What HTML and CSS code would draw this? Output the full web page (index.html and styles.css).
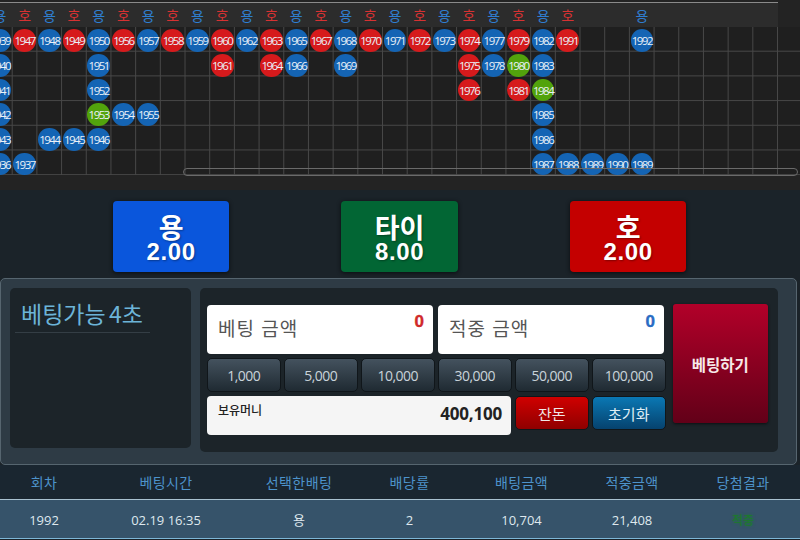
FILE: index.html
```html
<!DOCTYPE html>
<html lang="ko">
<head>
<meta charset="utf-8">
<title>베팅</title>
<link rel="stylesheet" href="styles.css">
</head>
<body>
<div class="page">
  <section class="board">
    <div class="head">
      <span class="lb y">용</span><span class="lb h">호</span><span class="lb y">용</span><span class="lb h">호</span><span class="lb y">용</span><span class="lb h">호</span><span class="lb y">용</span><span class="lb h">호</span><span class="lb y">용</span><span class="lb h">호</span><span class="lb y">용</span><span class="lb h">호</span><span class="lb y">용</span><span class="lb h">호</span><span class="lb y">용</span><span class="lb h">호</span><span class="lb y">용</span><span class="lb h">호</span><span class="lb y">용</span><span class="lb h">호</span><span class="lb y">용</span><span class="lb h">호</span><span class="lb y">용</span><span class="lb h">호</span><span class="lb"></span><span class="lb"></span><span class="lb y">용</span>
    </div>
    <div class="grid">
      <div class="col"><b class="dot bl">1939</b><b class="dot bl">1940</b><b class="dot bl">1941</b><b class="dot bl">1942</b><b class="dot bl">1943</b><b class="dot bl">1936</b></div>
      <div class="col"><b class="dot rd">1947</b><i></i><i></i><i></i><i></i><b class="dot bl">1937</b></div>
      <div class="col"><b class="dot bl">1948</b><i></i><i></i><i></i><b class="dot bl">1944</b></div>
      <div class="col"><b class="dot rd">1949</b><i></i><i></i><i></i><b class="dot bl">1945</b></div>
      <div class="col"><b class="dot bl">1950</b><b class="dot bl">1951</b><b class="dot bl">1952</b><b class="dot gr">1953</b><b class="dot bl">1946</b></div>
      <div class="col"><b class="dot rd">1956</b><i></i><i></i><b class="dot bl">1954</b></div>
      <div class="col"><b class="dot bl">1957</b><i></i><i></i><b class="dot bl">1955</b></div>
      <div class="col"><b class="dot rd">1958</b></div>
      <div class="col"><b class="dot bl">1959</b></div>
      <div class="col"><b class="dot rd">1960</b><b class="dot rd">1961</b></div>
      <div class="col"><b class="dot bl">1962</b></div>
      <div class="col"><b class="dot rd">1963</b><b class="dot rd">1964</b></div>
      <div class="col"><b class="dot bl">1965</b><b class="dot bl">1966</b></div>
      <div class="col"><b class="dot rd">1967</b></div>
      <div class="col"><b class="dot bl">1968</b><b class="dot bl">1969</b></div>
      <div class="col"><b class="dot rd">1970</b></div>
      <div class="col"><b class="dot bl">1971</b></div>
      <div class="col"><b class="dot rd">1972</b></div>
      <div class="col"><b class="dot bl">1973</b></div>
      <div class="col"><b class="dot rd">1974</b><b class="dot rd">1975</b><b class="dot rd">1976</b></div>
      <div class="col"><b class="dot bl">1977</b><b class="dot bl">1978</b></div>
      <div class="col"><b class="dot rd">1979</b><b class="dot gr">1980</b><b class="dot rd">1981</b></div>
      <div class="col"><b class="dot bl">1982</b><b class="dot bl">1983</b><b class="dot gr">1984</b><b class="dot bl">1985</b><b class="dot bl">1986</b><b class="dot bl">1987</b></div>
      <div class="col"><b class="dot rd">1991</b><i></i><i></i><i></i><i></i><b class="dot bl">1988</b></div>
      <div class="col"><i></i><i></i><i></i><i></i><i></i><b class="dot bl">1989</b></div>
      <div class="col"><i></i><i></i><i></i><i></i><i></i><b class="dot bl">1990</b></div>
      <div class="col"><b class="dot bl">1992</b><i></i><i></i><i></i><i></i><b class="dot bl">1989</b></div>
    </div>
    <div class="thumb"></div>
  </section>

  <section class="picks">
    <button class="pick blue"><span class="pick-name">용</span><span class="pick-odds">2.00</span></button>
    <button class="pick green"><span class="pick-name">타이</span><span class="pick-odds">8.00</span></button>
    <button class="pick red"><span class="pick-name">호</span><span class="pick-odds">2.00</span></button>
  </section>

  <section class="panel">
    <div class="timer"><h2>베팅가능 4초</h2></div>
    <div class="slip">
      <div class="slip-main">
        <div class="amounts">
          <div class="amount"><span>베팅 금액</span><strong class="zero-r">0</strong></div>
          <div class="amount"><span>적중 금액</span><strong class="zero-b">0</strong></div>
        </div>
        <div class="chips">
          <button class="chip">1,000</button><button class="chip">5,000</button><button class="chip">10,000</button><button class="chip">30,000</button><button class="chip">50,000</button><button class="chip">100,000</button>
        </div>
        <div class="money-row">
          <div class="money"><span>보유머니</span><strong>400,100</strong></div>
          <button class="act act-red">잔돈</button>
          <button class="act act-blue">초기화</button>
        </div>
      </div>
      <button class="submit">베팅하기</button>
    </div>
  </section>

  <section class="table">
    <div class="tr th"><span>회차</span><span>베팅시간</span><span>선택한배팅</span><span>배당률</span><span>배팅금액</span><span>적중금액</span><span>당첨결과</span></div>
    <div class="tr td"><span>1992</span><span>02.19 16:35</span><span>용</span><span>2</span><span>10,704</span><span>21,408</span><span class="won">적중</span></div>
  </section>
</div>
</body>
</html>
```
FILE: styles.css
```css
* { box-sizing: border-box; }
html, body { margin: 0; padding: 0; }
body {
  width: 800px;
  height: 540px;
  overflow: hidden;
  background: #1b2329;
  font-family: "Noto Sans CJK KR", "Open Sans", sans-serif;
}
.page { width: 800px; height: 540px; overflow: hidden; }
button { font-family: inherit; cursor: pointer; padding: 0; }

/* road board */
.board {
  position: relative;
  height: 190px;
  padding-top: 2px;
  background: #232323;
  overflow: hidden;
}
.head {
  display: flex;
  width: 790px;
  height: 25px;
  margin-left: -12.35px;
  background: #2c2c2c;
  border-top: 1px solid #8a8a8a;
}
.lb {
  flex: none;
  width: 24.7px;
  text-align: center;
  font-size: 14px;
  line-height: 25px;
}
.lb.y { color: #2f7ed0; }
.lb.h { color: #d63232; }
.grid {
  display: flex;
  width: 815px;
  height: 148.2px;
  margin-left: -12.35px;
  background-color: #1f1f1f;
  background-image:
    linear-gradient(to left, #474747 1px, transparent 1px),
    linear-gradient(to top, #474747 1px, transparent 1px);
  background-size: 24.7px 24.7px;
}
.col { flex: none; width: 24.7px; display: flex; flex-direction: column; }
.col i { display: block; height: 24.7px; flex: none; }
.dot {
  flex: none;
  display: flex;
  align-items: center;
  justify-content: center;
  width: 22.7px;
  height: 22.7px;
  margin: 2.3px 1px -.3px 1px;
  border-radius: 50%;
  color: #eaf1f8;
  font-family: "Open Sans", sans-serif;
  font-weight: 400;
  font-size: 11.5px;
  letter-spacing: -1.5px;
}
.bl { background: #1464b4; }
.rd { background: #d61a1c; }
.gr { background: #52a30c; }
.thumb {
  position: absolute;
  left: 183px;
  top: 168px;
  width: 615px;
  height: 8px;
  border: 1px solid #6a6a6a;
  border-radius: 5px;
}

/* pick buttons */
.picks {
  display: flex;
  height: 88px;
  padding: 11px 0 0 113px;
  gap: 112.3px;
}
.pick {
  flex: none;
  display: flex;
  flex-direction: column;
  align-items: center;
  width: 116.2px;
  height: 71px;
  border: 0;
  border-radius: 4px;
  color: #fff;
  box-shadow: 0 1px 4px #0a0d10;
  text-shadow: 1px 1px 2px rgba(0,0,0,.35);
}
.pick-name { font-size: 27px; font-weight: 700; line-height: 36px; margin-top: 8px; }
.pick-odds {
  font-family: "Liberation Sans", sans-serif;
  font-size: 24px;
  font-weight: 700;
  line-height: 24px;
  letter-spacing: .6px;
  margin-top: -5px;
}
.blue { background: #0a56dc; }
.green { background: #026634; }
.red { background: #c40000; }

/* bet panel */
.panel {
  display: flex;
  gap: 9px;
  width: 797px;
  height: 187px;
  padding: 9px 0 0 9px;
  background: #2e3b45;
  border: 1px solid #56656f;
  border-radius: 5px;
}
.timer {
  flex: none;
  width: 181px;
  height: 160px;
  padding: 4px 0 0 5px;
  background: #1c2429;
  border-radius: 5px;
}
.timer h2 {
  width: 135px;
  height: 41px;
  margin: 0;
  padding-left: 6px;
  font-size: 23px;
  font-weight: 400;
  line-height: 42px;
  white-space: nowrap;
  word-spacing: -3px;
  color: #6cb4d8;
  border-bottom: 1px solid #343e45;
}
.slip {
  flex: none;
  display: flex;
  width: 578px;
  height: 164px;
  padding: 16px 0 0 7px;
  gap: 8px;
  background: #1c2429;
  border-radius: 5px;
}
.slip-main { flex: none; width: 458px; display: flex; flex-direction: column; padding-top: 1px; }
.amounts { display: flex; gap: 5px; }
.amount {
  flex: none;
  display: flex;
  justify-content: space-between;
  width: 226px;
  height: 49px;
  padding: 0 9px 0 11px;
  background: #fff;
  border-radius: 4px;
  color: #555;
}
.amount span { font-size: 19px; line-height: 45px; letter-spacing: 1px; }
.amount strong {
  font-family: "Liberation Sans", sans-serif;
  font-size: 17px;
  line-height: 34px;
  -webkit-text-stroke: .4px currentColor;
}
.zero-r { color: #d02a2a; }
.zero-b { color: #2a6cc4; }
.chips { display: flex; gap: 3.4px; margin-top: 4px; }
.chip {
  flex: none;
  width: 73.6px;
  height: 34px;
  border: 1px solid #10161a;
  border-radius: 5px;
  background: linear-gradient(#44525e, #1f2a32);
  color: #c9d3da;
  font-family: "Open Sans", sans-serif;
  font-size: 14px;
  letter-spacing: -.5px;
}
.money-row { display: flex; gap: 3.4px; margin-top: 4px; align-items: flex-start; }
.money {
  flex: none;
  display: flex;
  justify-content: space-between;
  width: 304px;
  height: 39px;
  margin-right: .6px;
  padding: 0 9px 0 11px;
  background: #f5f5f5;
  border-radius: 4px;
  color: #222;
}
.money span { font-size: 12px; font-weight: 500; line-height: 28px; }
.money strong { font-family: "Open Sans", sans-serif; font-size: 17px; font-weight: 700; line-height: 36px; letter-spacing: -.2px; }
.act {
  flex: none;
  width: 73.6px;
  height: 34px;
  border: 1px solid #10161a;
  border-radius: 5px;
  color: #f0e8e8;
  font-size: 15px;
}
.act-red { background: linear-gradient(#d00000, #8f0000); }
.act-blue { background: linear-gradient(#0a78b4, #06426e); color: #dfeef6; }
.submit {
  flex: none;
  width: 94.5px;
  height: 119px;
  border: 0;
  border-radius: 3px;
  background: linear-gradient(#b20029, #620018);
  color: #f7e9e9;
  font-size: 15.5px;
  font-weight: 700;
  box-shadow: 0 1px 3px #0c1012;
}

/* results */
.tr {
  display: grid;
  grid-template-columns: 88px 156px 110px 111px 113px 108px 114px;
  align-items: center;
  text-align: center;
}
.th {
  height: 35px;
  background: #1a2630;
  border-bottom: 1px solid #a9c1d0;
  color: #4d93cb;
  font-size: 14px;
  letter-spacing: .4px;
}
.td {
  height: 39px;
  padding-top: 1px;
  background: #36536a;
  border-bottom: 1px solid #7db6d6;
  color: #dfe8ee;
  font-family: "Open Sans", "Noto Sans CJK KR", sans-serif;
  font-size: 13px;
}
.won { color: #1c7a2c; font-family: "Noto Sans CJK KR", sans-serif; font-size: 12px; text-shadow: 0 0 3px #1c7a2c; }
```
